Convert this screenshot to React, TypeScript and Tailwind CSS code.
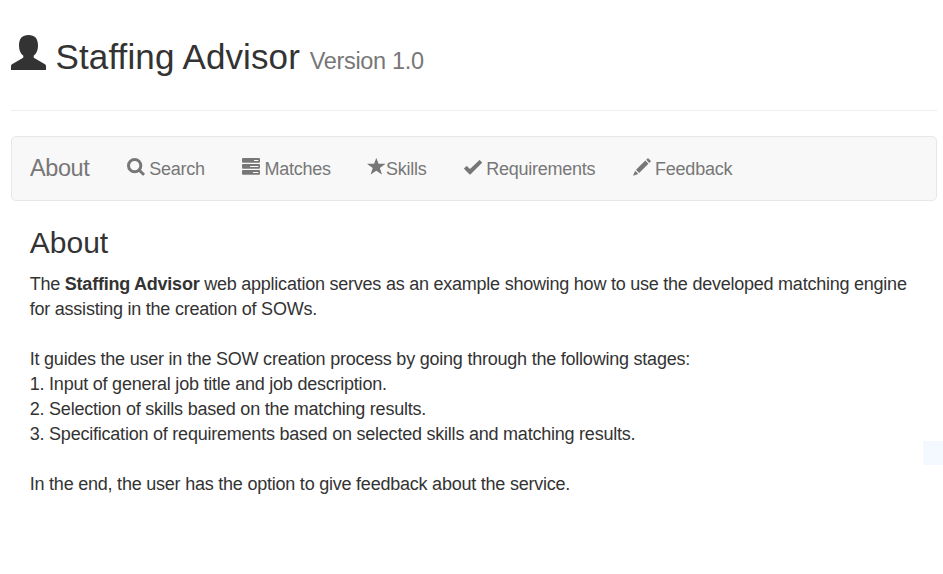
import type { ReactNode } from "react";

function Glyph({ children }: { children: ReactNode }) {
  return (
    <svg viewBox="0 0 1200 1200" className="relative top-[-1.5px] size-[18px] shrink-0 overflow-visible" fill="currentColor">
      {children}
    </svg>
  );
}

function UserIcon() {
  return (
    <svg viewBox="0 0 105 105" className="h-[35px] w-[35px] shrink-0" fill="currentColor">
      <path d="M52.5 0C34 0 24 10 24 32C24 46 29 56 37 62V66C37 68 36 69 34 70L3 88C1 89 0 91 0 94V105H105V94C105 91 104 89 102 88L71 70C69 69 68 68 68 66V62C76 56 81 46 81 32C81 10 71 0 52.5 0Z" />
    </svg>
  );
}

const search = (
  <Glyph>
    <circle cx="510" cy="510" r="410" fill="none" stroke="currentColor" strokeWidth="200" />
    <path d="M730 870L870 730L1180 1030Q1205 1055 1180 1080L1095 1165Q1070 1190 1045 1165Z" />
  </Glyph>
);

const tasks = (
  <Glyph>
    <path
      fillRule="evenodd"
      d="M70 0H1130Q1200 0 1200 70V250Q1200 320 1130 320H70Q0 320 0 250V70Q0 0 70 0ZM800 130V200H1090V130ZM70 400H1130Q1200 400 1200 470V650Q1200 720 1130 720H70Q0 720 0 650V470Q0 400 70 400ZM540 530V600H1090V530ZM70 800H1130Q1200 800 1200 870V1050Q1200 1120 1130 1120H70Q0 1120 0 1050V870Q0 800 70 800ZM730 930V1000H1090V930Z"
    />
  </Glyph>
);

const star = (
  <Glyph>
    <path
      transform="translate(0 1190) scale(1 -1)"
      d="M407 800l131 353q7 19 17.5 19t17.5 -19l129 -353h421q21 0 24 -8.5t-14 -20.5l-342 -249l130 -401q7 -20 -0.5 -25.5t-24.5 6.5l-343 246l-342 -247q-17 -12 -24.5 -6.5t-0.5 25.5l130 400l-347 251q-17 12 -14 20.5t23 8.5h429z"
    />
  </Glyph>
);

const check = (
  <Glyph>
    <path d="M1010 145Q1035 120 1060 145L1195 275Q1220 300 1195 325L425 1095Q400 1120 375 1095L15 735Q-10 710 15 685L150 550Q175 525 200 550L400 740Z" />
  </Glyph>
);

const pencil = (
  <Glyph>
    <path d="M970 25Q1000 -5 1030 25L1180 175Q1210 205 1180 235L1090 325L880 115ZM820 170L1030 380L410 1000L200 790ZM145 850L355 1060L0 1185Z" />
  </Glyph>
);

const items = [
  { label: "Search", icon: search, gap: "gap-[4.2px]" },
  { label: "Matches", icon: tasks, gap: "gap-[4.4px]" },
  { label: "Skills", icon: star, gap: "gap-0" },
  { label: "Requirements", icon: check, gap: "gap-[4.4px]" },
  { label: "Feedback", icon: pencil, gap: "gap-[4.4px]" },
];

export default function App() {
  return (
    <div className="relative h-[574px] w-[943px] overflow-hidden bg-white pl-[11px] pr-[6px] font-['Liberation_Sans',Arial,sans-serif] text-[18px] leading-[25px] tracking-[-0.225px] text-[#333]">
      <header className="flex h-[111px] border-b border-[#eee] pt-[35px]">
        <UserIcon />
        <h1 className="ml-[9.5px] mt-[3px] text-[35px] leading-[38px] tracking-[0.12px]">
          Staffing Advisor <small className="text-[23.5px] tracking-[-0.34px] text-[#777]">Version 1.0</small>
        </h1>
      </header>

      <nav className="mt-[25px] flex h-[65px] items-center gap-[37.3px] rounded-[5px] border border-[#e7e7e7] bg-[#f8f8f8] pl-[18px] text-[#777]">
        <a className="w-[59.7px] whitespace-nowrap text-[23.5px] tracking-[-0.4px]">About</a>
        {items.map((item) => (
          <a key={item.label} className={`flex items-center ${item.gap}`}>
            {item.icon}
            <span className="pt-[2px] tracking-[-0.245px]">{item.label}</span>
          </a>
        ))}
      </nav>

      <main className="px-[18.75px] pt-[25px]">
        <h2 className="mb-[13px] text-[30px] leading-[33px] tracking-normal">About</h2>
        <p className="tracking-[-0.235px]">
          The <strong>Staffing Advisor</strong> web application serves as an example showing how to use the developed matching engine for assisting in the creation of SOWs.
        </p>
        <p className="mt-[25px]">It guides the user in the SOW creation process by going through the following stages:</p>
        <p>1. Input of general job title and job description.</p>
        <p>2. Selection of skills based on the matching results.</p>
        <p>3. Specification of requirements based on selected skills and matching results.</p>
        <p className="mt-[25px]">In the end, the user has the option to give feedback about the service.</p>
      </main>

      <div className="absolute right-0 top-[441px] h-[24px] w-[20px] bg-[#f4f9ff]" />
    </div>
  );
}
